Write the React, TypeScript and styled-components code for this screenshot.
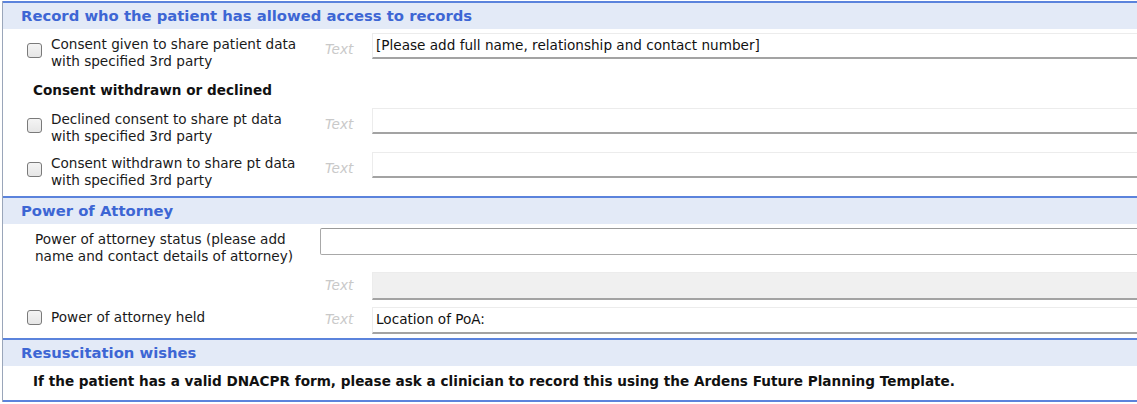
import React from "react";
import styled, { createGlobalStyle } from "styled-components";

const GlobalStyle = createGlobalStyle`
  html, body {
    margin: 0;
    padding: 0;
    background: #ffffff;
    overflow: hidden;
  }
  body {
    font-family: "DejaVu Sans", sans-serif;
    font-size: 13.6px;
    color: #1a1a1a;
  }
`;

const Frame = styled.div`
  width: 1180px;
  margin: 1px 0 0 2px;
  border-left: 1px solid #9aa6ba;
`;

const SectionHeader = styled.div`
  height: 26px;
  border-top: 2px solid #5b83dc;
  background: #e3eaf7;
  color: #3d66d4;
  font-weight: bold;
  font-size: 14.8px;
  line-height: 26px;
  padding-left: 18px;
  white-space: nowrap;
`;

const SectionBody = styled.div<{ $padTop?: number; $padBottom?: number }>`
  padding-top: ${({ $padTop }) => $padTop ?? 0}px;
  padding-bottom: ${({ $padBottom }) => $padBottom ?? 0}px;
`;

const Row = styled.div<{ $height: number }>`
  display: grid;
  grid-template-columns: 317px 52px 1fr;
  align-items: start;
  height: ${({ $height }) => $height}px;
`;

const LabelCell = styled.div<{ $indent: number; $top?: number }>`
  display: flex;
  align-items: flex-start;
  gap: 9px;
  padding-left: ${({ $indent }) => $indent}px;
  padding-top: ${({ $top }) => $top ?? 3}px;
  line-height: 17px;
  white-space: nowrap;
`;

const CheckBox = styled.span`
  flex: none;
  width: 13px;
  height: 13px;
  margin-top: 7px;
  border: 1px solid #7a7a7a;
  border-radius: 3px;
  background: linear-gradient(#f4f4f4, #e6e6e6);
`;

const SingleCheck = styled(CheckBox)`
  margin-top: 1px;
`;

const TextHint = styled.div<{ $top?: number }>`
  padding-left: 5px;
  padding-top: ${({ $top }) => $top ?? 8}px;
  line-height: 17px;
  font-style: italic;
  color: #c9c9c9;
`;

const Field = styled.div<{ $disabled?: boolean; $height?: number }>`
  height: ${({ $height }) => $height ?? 26}px;
  box-sizing: border-box;
  border-top: 1px solid #ececec;
  border-left: 1px solid #ececec;
  border-bottom: 2px solid #a3a3a3;
  background: ${({ $disabled }) => ($disabled ? "#f0f0f0" : "#ffffff")};
  padding-left: 3px;
  line-height: 23px;
  color: #111;
  white-space: nowrap;
  overflow: hidden;
`;

const BoxField = styled.div`
  grid-column: 2 / span 2;
  height: 27px;
  box-sizing: border-box;
  border: 1px solid #a8a8a8;
  border-top-color: #9a9a9a;
  border-radius: 2px;
  background: #fff;
`;

const SubHeading = styled.div`
  padding: 5px 0 0 30px;
  height: 31px;
  box-sizing: border-box;
  line-height: 17px;
  font-weight: bold;
  color: #111;
`;

const Notice = styled.div`
  padding: 7px 0 0 30px;
  height: 34px;
  box-sizing: border-box;
  line-height: 17px;
  font-weight: bold;
  color: #111;
  white-space: nowrap;
`;

const BottomLine = styled.div`
  border-top: 2px solid #5b83dc;
`;

type ConsentRowProps = { label: [string, string]; value?: string };

const ConsentRow = ({ label, value }: ConsentRowProps) => (
  <Row $height={44}>
    <LabelCell $indent={24}>
      <CheckBox />
      <div>
        {label[0]}
        <br />
        {label[1]}
      </div>
    </LabelCell>
    <TextHint>Text</TextHint>
    <Field>{value}</Field>
  </Row>
);

export default function App() {
  return (
    <>
      <GlobalStyle />
      <Frame>
        <SectionHeader>Record who the patient has allowed access to records</SectionHeader>
        <SectionBody $padTop={4}>
          <ConsentRow
            label={["Consent given to share patient data", "with specified 3rd party"]}
            value="[Please add full name, relationship and contact number]"
          />
          <SubHeading>Consent withdrawn or declined</SubHeading>
          <ConsentRow label={["Declined consent to share pt data", "with specified 3rd party"]} />
          <ConsentRow label={["Consent withdrawn to share pt data", "with specified 3rd party"]} />
        </SectionBody>

        <SectionHeader>Power of Attorney</SectionHeader>
        <SectionBody $padTop={4} $padBottom={4}>
          <Row $height={44}>
            <LabelCell $indent={32} $top={3}>
              <div>
                Power of attorney status (please add
                <br />
                name and contact details of attorney)
              </div>
            </LabelCell>
            <BoxField />
          </Row>
          <Row $height={35}>
            <div />
            <TextHint $top={5}>Text</TextHint>
            <Field $disabled $height={28} />
          </Row>
          <Row $height={27}>
            <LabelCell $indent={24} $top={2}>
              <SingleCheck />
              <div>Power of attorney held</div>
            </LabelCell>
            <TextHint $top={4}>Text</TextHint>
            <Field $height={27}>Location of PoA:</Field>
          </Row>
        </SectionBody>

        <SectionHeader>Resuscitation wishes</SectionHeader>
        <Notice>
          If the patient has a valid DNACPR form, please ask a clinician to record this using the Ardens Future Planning Template.
        </Notice>
        <BottomLine />
      </Frame>
    </>
  );
}
